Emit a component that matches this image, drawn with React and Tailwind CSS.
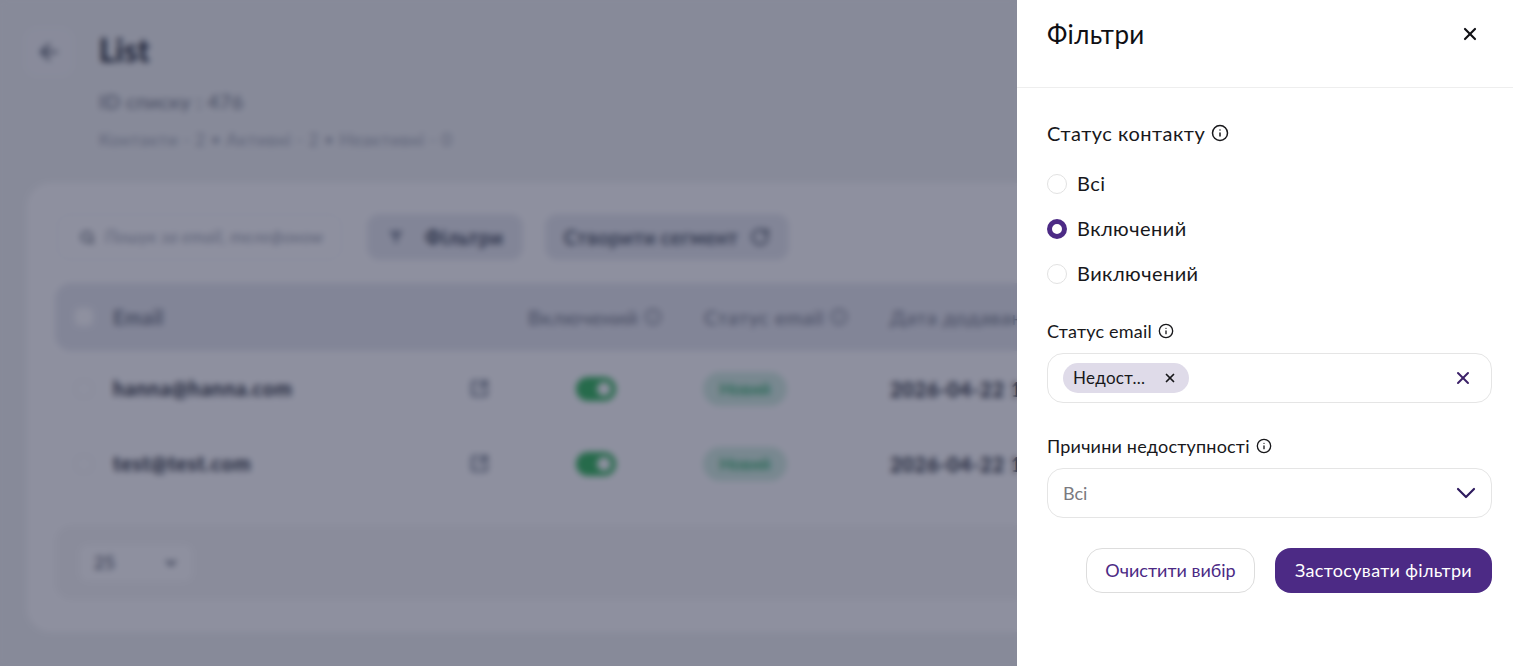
import React from "react";
import { ArrowLeft, Search, Info, RotateCw, SquareArrowOutUpRight, ChevronDown, X } from "lucide-react";

function FilterGlyph() {
  return (
    <svg width="16" height="16" viewBox="0 0 16 16" className="text-[#7b8494]">
      <path d="M1 2h14L9.5 9v5h-3V9L1 2z" fill="currentColor" />
    </svg>
  );
}

function Toggle() {
  return (
    <div className="flex h-[24px] w-[40px] items-center justify-end rounded-full bg-[#2fb457] pr-[5px]">
      <div className="h-[14px] w-[14px] rounded-full bg-white" />
    </div>
  );
}

function Row({ email }) {
  return (
    <div className="flex h-[75px] items-center text-[#111827]">
      <div className="ml-[20px] h-[18px] w-[18px] rounded-[5px] border border-[#e5e7eb] bg-white" />
      <div className="-mt-[2px] ml-[20px] w-[357px] text-[20px] font-bold tracking-[0.8px]">{email}</div>
      <SquareArrowOutUpRight size={19} strokeWidth={2.5} className="text-[#475569]" />
      <div className="ml-[87px] w-[127px]"><Toggle /></div>
      <div className="flex h-[34px] w-[84px] items-center justify-center rounded-full bg-[#d3eee0] text-[17px] font-bold text-[#3fb574]">Новий</div>
      <div className="ml-[103px] whitespace-nowrap text-[20px] font-bold tracking-[0.7px]">2026-04-22 12:04</div>
    </div>
  );
}

function Radio({ label, checked }) {
  return (
    <label className="flex h-[45px] items-center gap-[10px] text-[20px] tracking-[0.45px] text-[#18181b]">
      {checked ? (
        <span className="h-[20px] w-[20px] rounded-full border-[5px] border-[#4c2a85] bg-white" />
      ) : (
        <span className="h-[20px] w-[20px] rounded-full border border-[#e2e2e2] bg-white" />
      )}
      <span className="-mt-[2px]">{label}</span>
    </label>
  );
}

function FieldLabel({ text }) {
  return (
    <div className="flex h-[24px] items-center gap-[6px] text-[18px] tracking-[0.2px] text-[#18181b]">
      <span className="-mt-[1px]">{text}</span>
      <Info size={16} strokeWidth={2} className="-mt-[2px]" />
    </div>
  );
}

export default function App() {
  return (
    <div className="relative h-[666px] w-full overflow-hidden bg-[#f1f3f3] font-['Lato','Noto_Sans',sans-serif]">
      <div className="flex gap-[26px] pl-[25px] pt-[28px]">
        <div className="flex h-[48px] w-[48px] items-center justify-center rounded-xl bg-[#f4f5f7]">
          <ArrowLeft size={26} strokeWidth={2} className="text-[#374151]" />
        </div>
        <div>
          <h1 className="-mt-[1px] text-[32px] font-bold leading-[46px] text-[#111827]">List</h1>
          <div className="mt-[14px] text-[20px] leading-[28px] tracking-[0.4px] text-[#6b7280]">ID списку : 476</div>
          <div className="mt-[15px] text-[17px] leading-[20px] tracking-[0.65px] text-[#9ca3af]">Контакти - 2 • Активні - 2 • Неактивні - 0</div>
        </div>
      </div>

      <div className="ml-[27px] mt-[33px] flex h-[449px] flex-col rounded-[24px] bg-white px-[28px] pb-[32px] pt-[31px]">
        <div className="flex items-center">
          <div className="ml-[2px] flex h-[46px] w-[285px] items-center gap-[10px] whitespace-nowrap rounded-xl border border-[#f0f1f3] bg-white pl-[22px] text-[17px] italic tracking-[0.35px] text-[#9ca3af]">
            <Search size={15} strokeWidth={3} className="text-[#4b5563]" />
            Пошук за email, телефоном
          </div>
          <div className="ml-[25px] flex h-[46px] w-[156px] items-center gap-[21px] rounded-xl bg-[#e7e9ef] pl-[21px] text-[20px] font-bold tracking-[0.5px] text-[#374151]">
            <FilterGlyph />
            Фільтри
          </div>
          <div className="ml-[22px] flex h-[46px] w-[244px] items-center justify-center gap-[12px] rounded-xl bg-[#e7e9ef] text-[20px] font-bold tracking-[0.3px] text-[#4b5563]">
            Створити сегмент
            <RotateCw size={20} strokeWidth={2.5} />
          </div>
        </div>

        <div className="mt-[23px] flex h-[68px] items-center rounded-[16px] bg-[#e7e9ef] text-[20px] tracking-[0.5px] text-[#6b7280]">
          <div className="ml-[20px] h-[18px] w-[18px] rounded-[5px] bg-white" />
          <div className="ml-[20px] w-[415px] font-bold">Email</div>
          <div className="flex w-[176px] items-center gap-[6px]">Включений <Info size={18} /></div>
          <div className="flex w-[186px] items-center gap-[6px]">Статус email <Info size={18} /></div>
          <div className="whitespace-nowrap">Дата додавання</div>
        </div>

        <Row email="hanna@hanna.com" />
        <Row email="test@test.com" />

        <div className="mt-[24px] flex h-[75px] items-center rounded-[16px] bg-[#f7f7f7] pl-[25px]">
          <div className="flex h-[36px] w-[112px] items-center justify-between rounded-lg bg-white pl-[14px] pr-[13px] text-[18px] text-[#374151]">
            25
            <ChevronDown size={16} strokeWidth={3} />
          </div>
        </div>
      </div>

      <div className="absolute inset-0 bg-[rgba(29,33,63,0.5)] backdrop-blur-[3px]" />

      <aside className="absolute bottom-0 right-0 top-0 w-[496px] bg-white">
        <div className="flex h-[88px] items-start justify-between border-b border-[#eeeeee] pl-[30px] pr-[33px] pt-[15px]">
          <h2 className="text-[26px] leading-[38px] tracking-[0.4px] text-[#0f0f14]">Фільтри</h2>
          <X size={20} strokeWidth={2.6} className="mt-[9px] text-[#0f0f14]" />
        </div>

        <div className="pl-[30px] pr-[21px]">
          <div className="mt-[32px] flex h-[28px] items-center gap-[6px] text-[20px] tracking-[0.5px] text-[#18181b]">
            <span className="-mt-[2px]">Статус контакту</span>
            <Info size={18} strokeWidth={2} className="-mt-[2px]" />
          </div>
          <div className="mt-[13px] flex flex-col">
            <Radio label="Всі" />
            <Radio label="Включений" checked />
            <Radio label="Виключений" />
          </div>

          <div className="mt-[24px]"><FieldLabel text="Статус email" /></div>
          <div className="mt-[9px] flex h-[50px] items-center justify-between rounded-[16px] border border-[#e5e5e5] pl-[15px] pr-[18px]">
            <div className="flex h-[30px] w-[126px] items-center justify-between rounded-full bg-[#dfdbe9] pl-[10px] pr-[12px] text-[17px] tracking-[0.3px] text-[#18181b]">
              Недост...
              <X size={14} strokeWidth={3} />
            </div>
            <X size={20} strokeWidth={2.4} className="text-[#3b2168]" />
          </div>

          <div className="mt-[32px]"><FieldLabel text="Причини недоступності" /></div>
          <div className="mt-[9px] flex h-[50px] items-center justify-between rounded-[16px] border border-[#e5e5e5] pl-[15px] pr-[9px] text-[18px] text-[#7a7a80]">
            <span className="mt-[1px]">Всі</span>
            <ChevronDown size={32} strokeWidth={1.6} className="text-[#2e1a5e]" />
          </div>

          <div className="mt-[30px] flex justify-end gap-[20px] text-[18px]">
            <button className="h-[45px] w-[169px] rounded-[16px] border border-[#dddddd] bg-white text-[#4c2a85]">Очистити вибір</button>
            <button className="h-[45px] w-[217px] rounded-[16px] bg-[#4c2a85] tracking-[0.33px] text-white">Застосувати фільтри</button>
          </div>
        </div>
      </aside>
    </div>
  );
}
